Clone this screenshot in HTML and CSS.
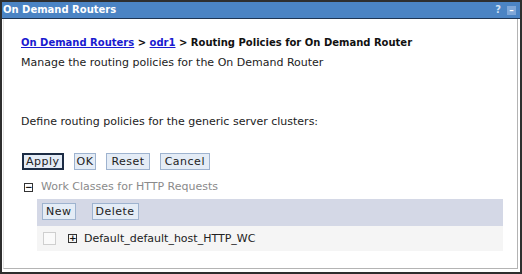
FILE: index.html
```html
<!DOCTYPE html>
<html lang="en">
<head>
  <meta charset="UTF-8">
  <title>On Demand Routers</title>
  <link rel="stylesheet" href="styles.css">
</head>
<body>
  <div class="portlet">
    <div class="title-bar">
      <span class="title">On Demand Routers</span>
      <span class="title-icons"><span class="help">?</span><span class="minimize">&ndash;</span></span>
    </div>
    <div class="frame">
      <div class="content">
        <div class="breadcrumb">
          <a href="#">On Demand Routers</a> &gt; <a href="#">odr1</a> &gt; Routing Policies for On Demand Router
        </div>
        <p class="desc">Manage the routing policies for the On Demand Router</p>

        <p class="define">Define routing policies for the generic server clusters:</p>

        <div class="actions">
          <button class="btn default">Apply</button>
          <button class="btn ok">OK</button>
          <button class="btn">Reset</button>
          <button class="btn">Cancel</button>
        </div>

        <div class="section-head">
          <span class="toggle">&minus;</span>
          <span class="section-title">Work Classes for HTTP Requests</span>
        </div>

        <div class="wc-table">
          <div class="wc-toolbar">
            <button class="btn small">New</button>
            <button class="btn small">Delete</button>
          </div>
          <div class="wc-row">
            <span class="check"></span>
            <span class="toggle plus">+</span>
            <span class="wc-name">Default_default_host_HTTP_WC</span>
          </div>
        </div>
      </div>
    </div>
  </div>
</body>
</html>
```

FILE: styles.css
```css
* {
  box-sizing: border-box;
}

body {
  margin: 0;
  background: #fff;
  font-family: 'DejaVu Sans', Verdana, sans-serif;
  font-size: 11px;
  line-height: 14px;
  color: #222;
}

.portlet {
  width: 522px;
  height: 274px;
  border: 2px solid #2e2e2e;
  display: flex;
  flex-direction: column;
  background: #fff;
}

.title-bar {
  height: 17px;
  background: #4b84c4;
  border-bottom: 1px solid #1e3553;
  display: flex;
  align-items: center;
  justify-content: space-between;
  padding: 0 4px 0 1px;
  color: #fff;
  font-weight: bold;
  font-size: 10px;
}

.title-icons {
  display: flex;
  gap: 6px;
  align-items: center;
  color: #cfe0f3;
}

.minimize {
  width: 9px;
  height: 9px;
  line-height: 8px;
  font-size: 9px;
  text-align: center;
  background: #7fa7d8;
  color: #fff;
}

.frame {
  flex: 1;
  padding: 0 2px 3px 1px;
  display: flex;
}

.content {
  flex: 1;
  border-left: 1px solid #e4e4e4;
  border-right: 1px solid #b4b4b4;
  border-bottom: 1px solid #b4b4b4;
  padding: 17px 14px 0 17px;
}

.breadcrumb {
  font-weight: bold;
  font-size: 10px;
  color: #111;
}

.breadcrumb a {
  color: #1a1ad0;
}

.desc {
  margin: 6px 0 0;
}

.define {
  margin: 45px 0 0;
}

.actions {
  display: flex;
  gap: 10px;
  margin-top: 24px;
  padding-left: 1px;
}

.btn {
  font-family: inherit;
  font-size: 11px;
  line-height: 13px;
  letter-spacing: 0.5px;
  color: #222;
  background: #e4ecf6;
  border: 1px solid #9eb3cf;
  padding: 1px 4px;
  height: 17px;
  cursor: pointer;
}

.btn.ok {
  padding: 1px 2px;
}

.btn.default {
  border: 2px solid #1c2c44;
  padding: 0 2px;
}

.section-head {
  display: flex;
  align-items: center;
  gap: 8px;
  margin-top: 10px;
  padding-left: 3px;
  color: #8a8a8a;
}

.toggle {
  width: 9px;
  height: 9px;
  border: 1px solid #333;
  font-size: 9px;
  line-height: 7px;
  text-align: center;
  color: #111;
  font-weight: bold;
}

.wc-table {
  margin: 5px 0 0 16px;
  width: 466px;
}

.wc-toolbar {
  background: #d4d8e6;
  padding: 4px 5px 6px;
  display: flex;
  gap: 16px;
}

.btn.small {
  height: 17px;
  padding: 1px 3px;
}

.wc-row {
  background: #f5f5f5;
  height: 25px;
  display: flex;
  align-items: center;
  padding-left: 6px;
}

.check {
  width: 13px;
  height: 13px;
  border: 1px solid #cfcfcf;
  background: #fafafa;
  margin-right: 12px;
}

.wc-name {
  margin-left: 7px;
  color: #222;
}
```
